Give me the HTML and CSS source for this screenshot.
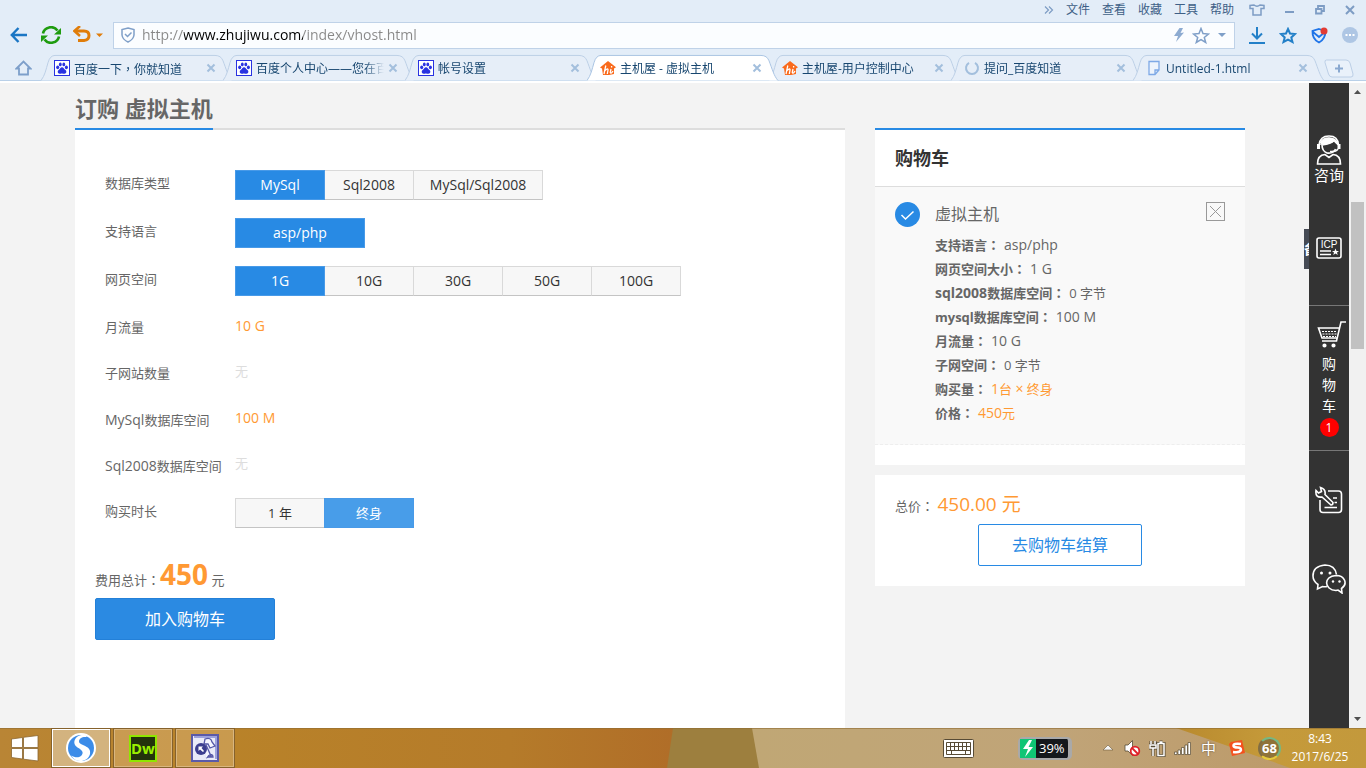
FILE: index.html
```html
<!DOCTYPE html>
<html lang="zh-CN">
<head>
<meta charset="utf-8">
<title>主机屋 - 虚拟主机</title>
<link rel="stylesheet" href="styles.css">
</head>
<body>
<svg class="defs" aria-hidden="true">
  <symbol id="tab-shape" viewBox="0 0 192 28" preserveAspectRatio="none">
    <path d="M0 27.500C4 22 5 16 7 9Q9 1.500 14 1.500H174Q180 1.500 182 7C185 15 187 23 191 27.500"/>
  </symbol>
  <symbol id="paw" viewBox="0 0 16 16">
    <rect x=".5" y=".5" width="15" height="15" fill="#fff" stroke="#2932e1"/>
    <g fill="#2932e1"><ellipse cx="3.700" cy="7.300" rx="1.500" ry="1.900"/><ellipse cx="6.300" cy="4.400" rx="1.400" ry="1.900"/><ellipse cx="9.800" cy="4.400" rx="1.400" ry="1.900"/><ellipse cx="12.400" cy="7.300" rx="1.500" ry="1.900"/><path d="M8 7.200C6.500 7.200 6 9 4.600 10.100C3.200 11.300 3.600 13.800 5.600 13.800C6.700 13.800 7 13.500 8 13.500S9.500 13.800 10.500 13.800C12.600 13.800 12.900 11.300 11.500 10.100C10 9 9.600 7.200 8 7.200z"/></g>
  </symbol>
  <symbol id="house" viewBox="0 0 16 16">
    <path d="M8 1L16 7.200L14 8.500V14L9 15H3L2 8.500L0 7.500z" fill="#f96a1c"/>
    <path d="M5.800 5.500L4 14M4.800 10.800Q8.200 7.500 8 10L7.300 14M11 9L10.300 12.500Q11 14.200 13 11M11.600 6V7.500" fill="none" stroke="#fff" stroke-width="1.300"/>
  </symbol>
  <symbol id="close" viewBox="0 0 10 10"><path d="M1.500 1.500L8.500 8.500M8.500 1.500L1.500 8.500" stroke="#a3bfdd" stroke-width="2"/></symbol>
</svg>

<header class="browser">
  <nav class="menu" aria-label="浏览器菜单">
    <svg width="10" height="8" viewBox="0 0 10 8" fill="none" stroke="#7d9cc4" stroke-width="1.200"><path d="M1 .5L4.500 4L1 7.500M5 .5L8.500 4L5 7.500"/></svg>
    <button>文件</button><button>查看</button><button>收藏</button><button>工具</button><button>帮助</button>
    <div class="window-buttons">
      <button aria-label="皮肤"><svg width="16" height="12" viewBox="0 0 16 12" fill="none" stroke="#7d9cc4" stroke-width="1.500"><path d="M5 1Q8 3.500 11 1L15 1.500V4.500H12V11H4V4.500H1V1.500z"/></svg></button>
      <button aria-label="最小化"><svg width="10" height="10"><path d="M0 7H9" stroke="#7d9cc4" stroke-width="2"/></svg></button>
      <button aria-label="还原"><svg width="10" height="10" viewBox="0 0 10 10" fill="none" stroke="#7d9cc4" stroke-width="1.800"><path d="M3 3V1H9V6H7M1 4H6.500V8.500H1z"/></svg></button>
      <button aria-label="关闭"><svg width="10" height="10"><path d="M1 1L9 9M9 1L1 9" stroke="#7d9cc4" stroke-width="2"/></svg></button>
    </div>
  </nav>

  <div class="toolbar">
    <button aria-label="后退"><svg width="18" height="16" viewBox="0 0 18 16" fill="none" stroke="#1b76c4" stroke-width="2.400"><path d="M17 8H2M8.500 1L1.800 8L8.500 15"/></svg></button>
    <button aria-label="刷新"><svg width="22" height="18" viewBox="0 0 22 18"><path d="M3 7.500A8 7.500 0 0 1 17.500 4.500M19 10.500A8 7.500 0 0 1 4.500 13.500" fill="none" stroke="#1f9c0f" stroke-width="2.600"/><path d="M21 2V8.500H14zM1 16V9.500H8z" fill="#1f9c0f"/></svg></button>
    <button aria-label="恢复" class="undo"><svg width="30" height="18" viewBox="0 0 30 18"><path d="M3 5H11Q16 5 16 9.500T11 14.500H5" fill="none" stroke="#e07d0a" stroke-width="3"/><path d="M7 0L1.500 5L7 10" fill="none" stroke="#e07d0a" stroke-width="2.600"/><path d="M23 7.500H30L26.500 11z" fill="#e07d0a"/></svg></button>
    <div class="address">
      <svg width="14" height="16" viewBox="0 0 14 16" fill="none" stroke="#7f9fc8" stroke-width="1.500"><path d="M7 1L13 2.500V8Q12.500 12.500 7 15Q1.500 12.500 1 8V2.500zM4 7L6.500 9.500L10.500 5.500"/></svg>
      <input class="url" type="text" aria-label="网址" value="http://www.zhujiwu.com/index/vhost.html">
      <button aria-label="极速模式"><svg width="10" height="14" viewBox="0 0 10 14"><path d="M5.500 0H9L6.500 5L10 4.500L2 14L4 8H0z" fill="#8dabd1"/></svg></button>
      <button aria-label="收藏此页"><svg width="18" height="17" viewBox="0 0 18 17"><path d="M9 1.500L11 6.500L16.500 7L12.300 10.400L13.700 15.500L9 12.600L4.300 15.500L5.700 10.400L1.500 7L7 6.500z" fill="none" stroke="#7f9fc8" stroke-width="1.500"/></svg></button>
      <button aria-label="展开"><svg width="8" height="5"><path d="M0 0H8L4 4z" fill="#7f9fc8"/></svg></button>
    </div>
    <div class="extensions">
      <button aria-label="下载"><svg width="16" height="17" viewBox="0 0 16 17" fill="none" stroke="#2380c8" stroke-width="2"><path d="M8 0V11M3 6.500L8 11.500L13 6.500M0 16H16"/></svg></button>
      <button aria-label="收藏夹"><svg width="18" height="17" viewBox="0 0 18 17"><path d="M9 2L11 6.500L16 7L12.300 10.400L13.500 15L9 12.600L4.500 15L5.700 10.400L2 7L7 6.500z" fill="none" stroke="#2380c8" stroke-width="2"/></svg></button>
      <button aria-label="安全"><svg width="17" height="17" viewBox="0 0 17 17"><path d="M8 2L14.500 4Q14.500 12 8 15.500Q1 12 1.500 4zM2 5L8 10L14 5" fill="none" stroke="#1f74e8" stroke-width="1.800"/><circle cx="13" cy="4" r="3.500" fill="#e23b34"/></svg></button>
      <button aria-label="更多"><svg width="16" height="16"><circle cx="8" cy="8" r="8" fill="#aec6e4"/><path d="M3.500 8H5.500M7 8H9M10.500 8H12.500" stroke="#fff" stroke-width="2"/></svg></button>
    </div>
  </div>

  <div class="tabs">
    <button class="home" aria-label="主页"><svg width="17" height="16" viewBox="0 0 17 16" fill="none" stroke="#7d9fca" stroke-width="1.800"><path d="M1.500 8.500L8.500 1.500L15.500 8.500H13V14.500H4V8.500z"/></svg></button>
    <div class="tab"><svg class="shape"><use href="#tab-shape"/></svg><svg class="fav"><use href="#paw"/></svg><a href="#">百度一下<span class="mark" lang="zh-TW">，</span>你就知道</a><button aria-label="关闭标签"><svg width="10" height="10"><use href="#close"/></svg></button></div>
    <div class="tab"><svg class="shape"><use href="#tab-shape"/></svg><svg class="fav"><use href="#paw"/></svg><a href="#">百度个人中心——您在百</a><button aria-label="关闭标签"><svg width="10" height="10"><use href="#close"/></svg></button></div>
    <div class="tab"><svg class="shape"><use href="#tab-shape"/></svg><svg class="fav"><use href="#paw"/></svg><a href="#">帐号设置</a><button aria-label="关闭标签"><svg width="10" height="10"><use href="#close"/></svg></button></div>
    <div class="tab active"><svg class="shape"><use href="#tab-shape"/></svg><svg class="fav"><use href="#house"/></svg><a href="#">主机屋 - 虚拟主机</a><button aria-label="关闭标签"><svg width="10" height="10"><use href="#close"/></svg></button></div>
    <div class="tab"><svg class="shape"><use href="#tab-shape"/></svg><svg class="fav"><use href="#house"/></svg><a href="#">主机屋-用户控制中心</a><button aria-label="关闭标签"><svg width="10" height="10"><use href="#close"/></svg></button></div>
    <div class="tab"><svg class="shape"><use href="#tab-shape"/></svg><svg class="fav" viewBox="0 0 16 16"><path d="M5 2.800A6 6 0 1 0 11 2.800" fill="none" stroke="#a3bfdd" stroke-width="2"/></svg><a href="#">提问_百度知道</a><button aria-label="关闭标签"><svg width="10" height="10"><use href="#close"/></svg></button></div>
    <div class="tab"><svg class="shape"><use href="#tab-shape"/></svg><svg class="fav" viewBox="0 0 16 16"><path d="M3 1.500H13V10L9 14.500H3zM13 10H9V14.500" fill="#eef4fc" stroke="#7ea9e6" stroke-width="1.300"/></svg><a href="#">Untitled-1.html</a><button aria-label="关闭标签"><svg width="10" height="10"><use href="#close"/></svg></button></div>
    <button class="new-tab" aria-label="新建标签"><svg width="30" height="19" viewBox="0 0 30 19"><path d="M2.500 1H22Q25 1 26 4L29 15Q29.500 18 27 18H8Q5.500 18 4.500 15L1 3.500Q.5 1 2.500 1z" fill="#e9f1fa" stroke="#bccfe6"/><path d="M11 9.500H19M15 5.500V13.500" stroke="#8aa9d0" stroke-width="2"/></svg></button>
  </div>
</header>

<div class="viewport">
  <div class="page">
    <main class="order">
      <div class="title-bar"><h1>订购 虚拟主机</h1></div>
      <form class="panel">
        <div class="row"><span class="label">数据库类型</span><div class="group"><button type="button" class="on" aria-pressed="true">MySql</button><button type="button">Sql2008</button><button type="button" class="wide">MySql/Sql2008</button></div></div>
        <div class="row"><span class="label">支持语言</span><div class="group"><button type="button" class="on wide" aria-pressed="true">asp/php</button></div></div>
        <div class="row"><span class="label">网页空间</span><div class="group"><button type="button" class="on" aria-pressed="true">1G</button><button type="button">10G</button><button type="button">30G</button><button type="button">50G</button><button type="button">100G</button></div></div>
        <div class="row text"><span class="label">月流量</span><span class="value">10 G</span></div>
        <div class="row text"><span class="label">子网站数量</span><span class="value none">无</span></div>
        <div class="row text"><span class="label"><span class="latin">MySql</span>数据库空间</span><span class="value">100 M</span></div>
        <div class="row text"><span class="label"><span class="latin">Sql2008</span>数据库空间</span><span class="value none">无</span></div>
        <div class="row"><span class="label">购买时长</span><div class="group cn"><button type="button">1 年</button><button type="button" class="on soft" aria-pressed="true">终身</button></div></div>
        <div class="total">
          <p>费用总计<span class="mark" lang="zh-TW">：</span><strong>450</strong> 元</p>
          <button type="button" class="add">加入购物车</button>
        </div>
      </form>
    </main>

    <aside class="cart">
      <section class="cart-list">
        <h2>购物车</h2>
        <article class="item">
          <label class="check"><input type="checkbox" checked aria-label="选择虚拟主机"><svg width="25" height="25" viewBox="0 0 25 25"><path d="M6.500 13L10.500 17L18.500 9.500" fill="none" stroke="#fff" stroke-width="1.500"/></svg></label>
          <div class="details">
            <h3>虚拟主机</h3>
            <dl>
              <div><dt>支持语言<span class="mark" lang="zh-TW">：</span></dt><dd class="latin">asp/php</dd></div>
              <div><dt>网页空间大小<span class="mark" lang="zh-TW">：</span></dt><dd class="latin">1 G</dd></div>
              <div><dt><span class="latin">sql2008</span>数据库空间<span class="mark" lang="zh-TW">：</span></dt><dd>0 字节</dd></div>
              <div><dt>mysql数据库空间<span class="mark" lang="zh-TW">：</span></dt><dd class="latin">100 M</dd></div>
              <div><dt>月流量<span class="mark" lang="zh-TW">：</span></dt><dd class="latin">10 G</dd></div>
              <div><dt>子网空间<span class="mark" lang="zh-TW">：</span></dt><dd>0 字节</dd></div>
              <div><dt>购买量<span class="mark" lang="zh-TW">：</span></dt><dd class="price"><span class="latin">1</span>台 <span class="latin">×</span> 终身</dd></div>
              <div><dt>价格<span class="mark" lang="zh-TW">：</span></dt><dd class="price"><span class="latin">450</span>元</dd></div>
            </dl>
          </div>
          <button class="remove" aria-label="删除"><svg width="19" height="19" viewBox="0 0 19 19" fill="none" stroke="#999"><rect x=".5" y=".5" width="18" height="18"/><path d="M4 4L15 15M15 4L4 15"/></svg></button>
        </article>
      </section>
      <section class="checkout">
        <p>总价<span class="mark" lang="zh-TW">：</span> <strong>450.00 元</strong></p>
        <button>去购物车结算</button>
      </section>
    </aside>
  </div>

  <nav class="side" aria-label="快捷工具">
    <span class="flyout">备</span>
    <a class="service" href="#">
      <svg width="26" height="30" viewBox="0 0 26 30" fill="none" stroke="#fff" stroke-width="1.600"><path d="M3 10Q4 1 13 1T22.500 10"/><path d="M4.500 8Q6 3 13 3T21.500 9Q20 8 18 5.500Q15 9 6 10Q6 16 11 18Q17 19 19.500 14"/><path d="M5 9Q7 4 13 3.500Q17 3.500 18 5.500Q13 9 5 9z" fill="#fff"/><path d="M2.500 9V14M23 9V14" stroke-width="3"/><path d="M22 14Q20 17 14 16.500"/><path d="M1.500 29Q1.500 20 9 19.500L13 22.500L17 19.500Q24.500 20 24.500 29z"/></svg>
      <span>咨询</span>
    </a>
    <a class="icp" href="#">
      <svg width="26" height="22" viewBox="0 0 26 22"><rect x="1" y="1" width="24" height="20" rx="2" fill="none" stroke="#fff" stroke-width="1.600"/><text x="13" y="11" class="icp-text">ICP</text><path d="M4 14H15M4 17.500H15" stroke="#fff" stroke-width="1.300"/><path d="M19.500 11.500L20.500 14H23L21 15.500L21.700 18L19.500 16.500L17.300 18L18 15.500L16 14H18.500z" fill="#fff"/></svg>
    </a>
    <a class="basket" href="#">
      <svg width="30" height="28" viewBox="0 0 30 28" fill="none" stroke="#fff" stroke-width="1.600"><path d="M29 2H24L19.500 21H5M22.500 8H1.500L5 18H20"/><path d="M5 11.500H20M5.500 14H19.500M6 16.500H19" stroke-width="1" stroke-dasharray="2 1"/><circle cx="7.500" cy="25.500" r="1.300" fill="#fff"/><circle cx="16.500" cy="25.500" r="1.300" fill="#fff"/></svg>
      <span class="vertical">购物车</span>
      <span class="badge">1</span>
    </a>
    <a class="tools" href="#">
      <svg width="28" height="28" viewBox="0 0 28 28" fill="none" stroke="#fff" stroke-width="1.600"><path d="M13 5H23.500Q26.500 5 26.500 8V23.500Q26.500 26.500 23.500 26.500H8Q5 26.500 5 23.500V14M18 12H22M19.500 16.500H22M9.500 21.500H22"/><path d="M5.500 1.500L6.500 5.500L3.500 7L1 4.500Q0 12 7 11L16 19Q18 19 18 16.500L10 8.500Q11 3 5.500 1.500z"/></svg>
    </a>
    <a class="wechat" href="#">
      <svg width="34" height="30" viewBox="0 0 34 30" fill="none" stroke="#fff" stroke-width="1.600"><path d="M24.500 10.500Q23 1 13 1Q1 2 1 12Q1 17 6 20.500L5.500 25L10.500 22.500Q13 23 15 22.500"/><path d="M24 11.500C11 12 12 26 24 26.500L26 26L30 29L29.500 24.500C36 20 33 11.500 24 11.500z"/><g fill="#fff" stroke="none"><circle cx="9.500" cy="9" r="1.500"/><circle cx="18" cy="9" r="1.500"/><circle cx="21" cy="17.500" r="1.200"/><circle cx="27.500" cy="17.500" r="1.200"/></g></svg>
    </a>
  </nav>

  <div class="scrollbar" aria-hidden="true">
    <svg width="17" height="17"><path d="M5 11L8.500 7L12 11z" fill="#505050"/></svg>
    <span class="before"></span><span class="thumb"></span><span class="after"></span>
    <svg width="17" height="17"><path d="M5 6L8.500 10L12 6z" fill="#505050"/></svg>
  </div>
</div>

<footer class="taskbar">
  <svg class="wallpaper" viewBox="0 0 1366 40" preserveAspectRatio="none" aria-hidden="true">
    <defs>
      <linearGradient id="wood"><stop offset="0" stop-color="#b98535"/><stop offset=".3" stop-color="#b98329"/><stop offset=".75" stop-color="#b57b2a"/><stop offset="1" stop-color="#b06d28"/></linearGradient>
      <linearGradient id="sand"><stop offset="0" stop-color="#c0a775"/><stop offset=".5" stop-color="#c0a478"/><stop offset="1" stop-color="#bb9765"/></linearGradient>
      <linearGradient id="gold"><stop offset="0" stop-color="#b98a2e"/><stop offset=".5" stop-color="#c59a3a"/><stop offset="1" stop-color="#c3993c"/></linearGradient>
    </defs>
    <path d="M0 0H680V40H0z" fill="url(#wood)"/>
    <path d="M673 0H755L762 40H667z" fill="#9d7f3e"/>
    <path d="M752 0H1366V40H759z" fill="url(#sand)"/>
    <path d="M1176 0H1366V40H1290Q1240 22 1176 0z" fill="url(#gold)"/>
    <path d="M0 .5H1366" stroke="#8f6c34" stroke-opacity=".6"/>
  </svg>
  <button class="start" aria-label="开始"><svg width="28" height="27" viewBox="0 0 28 27" fill="#fff" stroke="#8a6630" stroke-width=".8"><path d="M.5 4L11.500 2.500V12.500H.5zM12.500 2.300L27 .5V12.500H12.500zM.5 13.500H11.500V24L.5 22.500zM12.500 13.500H27V26L12.500 24.200z"/></svg></button>
  <button class="app current" aria-label="搜狗浏览器"><svg width="32" height="32" viewBox="0 0 32 32"><circle cx="16" cy="16" r="15" fill="#fff"/><circle cx="16" cy="16" r="13" fill="#3c8ce8"/><path d="M21.500 3.500C11 1 5.500 11 12.500 15.500C18 18.500 19 21 16 24C13 26.500 9 25 6 23.500C11 32 23 30 25 22C27 13 14 14 14 9.500C14 6.500 17 4.500 21.500 5z" fill="#fff"/></svg></button>
  <button class="app" aria-label="Dreamweaver"><span class="dw">Dw</span></button>
  <button class="app" aria-label="资源工具"><svg width="28" height="28" viewBox="0 0 28 28"><rect x="1" y="1" width="26" height="26" fill="#e9eaf8" stroke="#5a5aa8" stroke-width="2"/><path d="M3 3H25V25" fill="none" stroke="#9da2dc" stroke-width="2"/><path d="M14 5Q20 3 21 8L24 12L19 14L17 10H13zM15 11L20 22L15 24M17 22Q22 19 22 23H16" fill="#f6f6ff" stroke="#5558a8" stroke-width="1.300"/><circle cx="10" cy="15" r="6" fill="#3c3e8f"/><path d="M7.500 12.500H12L10.500 14L13 17L12 18L9 15.500L7.500 17z" fill="#fff"/></svg></button>

  <div class="tray">
    <button class="keyboard" aria-label="触摸键盘"><svg width="31" height="19" viewBox="0 0 31 19"><rect x=".5" y=".5" width="30" height="18" rx="1" fill="#fff" stroke="#574b35"/><path d="M3.500 3.500H27.500V15.500H3.500zM3.500 7.500H27.500M3.500 11.500H27.500M7.500 3.500V11.500M11.500 3.500V11.500M15.500 3.500V11.500M19.500 3.500V11.500M23.500 3.500V11.500M8.500 11.500V15.500M22.500 11.500V15.500" fill="none" stroke="#574b35"/></svg></button>
    <div class="battery"><svg width="16" height="19" viewBox="0 0 16 19"><path d="M0 0H16V19H0z" fill="#0fc575"/><path d="M9 1L3 10H8L5 18L13 8H8.500L12 1z" fill="#fff"/></svg><span>39%</span></div>
    <div class="status">
      <svg class="more" width="10" height="6"><path d="M5 0L10 5H0z" fill="#f4f4f4" stroke="#6c5a3b" stroke-width=".6"/></svg>
      <svg width="17" height="16" viewBox="0 0 17 16"><path d="M1 5H4L8.500 .5V15.500L4 11H1z" fill="#fff" stroke="#574b35" stroke-width=".8"/><circle cx="11" cy="11" r="4.300" fill="#fff" stroke="#df2027" stroke-width="1.800"/><path d="M8 8L14 14" stroke="#df2027" stroke-width="1.800"/></svg>
      <svg width="17" height="17" viewBox="0 0 17 17" fill="none"><path d="M2 1V4M6 1V4M1 5H7V8H1zM4 8V16M9 3.500H15V15.500H9zM10.500 2H13.500" stroke="#574b35" stroke-width="3"/><path d="M2 1V4M6 1V4M1 5H7V8H1zM4 8V16M9 3.500H15V15.500H9zM10.500 2H13.500" stroke="#fff" stroke-width="1.500"/></svg>
      <svg width="17" height="13" viewBox="0 0 17 13"><path d="M.5 10H3V12.500H.5zM4 8H6.500V12.500H4zM7.500 5.500H10V12.500H7.500zM11 3H13.500V12.500H11zM14 .5H16.500V12.500H14z" fill="#fff" stroke="#574b35" stroke-width=".7"/></svg>
      <span class="ime">中</span>
      <svg width="16" height="16" viewBox="0 0 16 16"><path d="M2 2L13 0L16 13L3 16L0 4z" fill="#f4511e"/><path d="M12 4Q4 3 4.500 6Q5 7.500 8.500 7.500T12 10Q11 13 4 12" fill="none" stroke="#fff" stroke-width="2.400"/></svg>
      <div class="score">68</div>
    </div>
    <time class="clock"><span>8:43</span><span>2017/6/25</span></time>
  </div>
</footer>
</body>
</html>
```
FILE: styles.css
```css
* { box-sizing: border-box; }
body {
  margin: 0;
  height: 100vh;
  display: flex;
  flex-direction: column;
  overflow: hidden;
  font: 13px/20px "Open Sans", "Noto Sans CJK SC", sans-serif;
  color: #666;
  background: #f3f3f3;
}
h1, h2, h3, p, dl, dd { margin: 0; }
button { font: inherit; color: inherit; border: 0; padding: 0; background: none; }
svg { display: block; flex: none; }
a { color: inherit; text-decoration: none; }
.defs { position: absolute; width: 0; height: 0; }
.latin { font-size: 14px; }
/* centred full-width punctuation */
.mark { font-family: "Noto Sans CJK TC", sans-serif; }

/* browser chrome */
.browser { background: #e3edf8; border-bottom: 2px solid #fff; flex: none; }
.menu {
  display: flex;
  justify-content: flex-end;
  align-items: center;
  gap: 12px;
  height: 20px;
  padding-right: 11px;
  font-size: 12px;
  color: #3e5f86;
}
.window-buttons { display: flex; align-items: center; gap: 20px; padding-left: 3px; }
.toolbar { display: flex; align-items: center; height: 30px; padding: 0 8px 0 10px; gap: 12px; }
.undo { margin-left: -1px; }
.address {
  flex: 1;
  display: flex;
  align-items: center;
  gap: 8px;
  height: 27px;
  margin-left: -2px;
  padding: 0 8px 0 7px;
  background: #fbfdff;
  border: 1px solid #bfd2e8;
}
.url {
  flex: 1;
  min-width: 0;
  height: 24px;
  margin-left: -1px;
  padding: 0;
  border: 0;
  outline: 0;
  font: 14px/24px "Open Sans", "Noto Sans CJK SC", sans-serif;
  color: transparent;
  background: linear-gradient(90deg, #888 42px, #000 42px, #000 161px, #888 161px);
  -webkit-background-clip: text;
  background-clip: text;
}
.extensions { display: flex; align-items: center; gap: 14px; padding-left: 2px; }

.tabs { display: flex; align-items: flex-end; height: 31px; border-bottom: 1px solid #b9d0e8; }
.home { width: 41px; padding: 0 0 4px 15px; }
.tab {
  position: relative;
  flex: 0 1 192px;
  min-width: 0;
  display: flex;
  align-items: center;
  height: 26px;
  margin-right: -10px;
  padding: 2px 17px 0 13px;
  font-size: 12px;
  color: #17466f;
}
.tab .shape { position: absolute; left: 0; top: 0; width: 100%; height: 27px; fill: #e6eef8; stroke: #bccfe6; }
.tab.active { z-index: 1; }
.tab.active .shape { fill: #fff; stroke: #a9c4e2; }
.fav { position: relative; width: 16px; height: 16px; margin-right: 4px; }
.tab a {
  position: relative;
  flex: 1;
  overflow: hidden;
  white-space: nowrap;
  margin-right: 4px;
  padding-top: 2px;
  mask-image: linear-gradient(90deg, #000 85%, transparent);
}
.tab button { position: relative; }
.new-tab { margin: 0 0 2px 9px; }

/* page */
.viewport { flex: 1; display: flex; min-height: 0; overflow: hidden; }
.page { flex: 1; display: flex; gap: 30px; min-width: 0; padding: 0 64px 0 75px; }
.order { flex: 1; display: flex; flex-direction: column; min-width: 0; }
.title-bar { display: flex; height: 47px; }
.title-bar::after { content: ""; flex: 1; border-bottom: 2px solid #ddd; }
h1 { font-size: 22px; line-height: 50px; border-bottom: 2px solid #288ae4; }
.panel { flex: 1; display: flex; flex-direction: column; gap: 18px; padding: 40px 20px 0; background: #fff; }
.row { display: flex; flex: none; height: 30px; padding-left: 10px; }
.row.text { height: 28px; }
.label { width: 130px; line-height: 27px; white-space: nowrap; }
.value { font-size: 14px; line-height: 24px; color: #ff9933; }
.value.none { font-size: 13px; line-height: 22px; color: #ddd; }
.group { display: flex; font-size: 14px; }
.group.cn { font-size: 13px; }
.group button {
  min-width: 90px;
  margin-right: -1px;
  color: #333;
  background: #f7f7f7;
  border: 1px solid #d9d9d9;
  border-bottom-color: #c4c4c4;
}
.group .wide { min-width: 130px; }
.group .on { position: relative; color: #fff; background: #288ae4; border-color: #489ae8; }
.group .soft { background: #489de9; }
.total { display: flex; flex-direction: column; align-items: flex-start; padding-top: 11px; }
.total p { line-height: 34px; height: 41px; }
.total strong { font-size: 28px; color: #ff9933; }
.add {
  width: 180px;
  height: 42px;
  font-size: 16px;
  color: #fff;
  background: #2b8ae2;
  border: 1px solid #2380d8;
  border-radius: 2px;
}

/* cart */
.cart { flex: 0 0 370px; padding-top: 45px; }
.cart-list { background: #fff; border-top: 2px solid #288ae4; padding-bottom: 20px; }
h2 { height: 57px; padding-left: 20px; font-size: 18px; line-height: 56px; color: #333; border-bottom: 1px solid #ddd; }
.item {
  display: flex;
  align-items: flex-start;
  gap: 15px;
  padding: 15px 20px 19px;
  background: #f9f9f9;
  border-bottom: 1px dashed #eee;
}
.check { display: grid; }
.check > * { grid-area: 1 / 1; }
.check input { appearance: none; width: 25px; height: 25px; margin: 0; border-radius: 50%; background: #288ae4; }
.check svg { z-index: 1; }
.details { flex: 1; }
h3 { font-size: 16px; font-weight: 400; line-height: 25px; padding-bottom: 6px; }
dl > div { display: flex; align-items: baseline; gap: 4px; height: 24px; line-height: 24px; }
dt { font-weight: 700; }
.price { color: #ff9933; }
.checkout { margin-top: 10px; padding: 13px 20px 20px; background: #fff; }
.checkout p { height: 36px; line-height: 32px; }
.checkout strong { font-size: 19px; font-weight: 400; color: #ff9933; }
.checkout button {
  display: block;
  width: 164px;
  height: 42px;
  margin: 0 auto;
  font-size: 16px;
  color: #288ae4;
  background: #fff;
  border: 1px solid #288ae4;
  border-radius: 2px;
}

/* right rail */
.side { position: relative; flex: 0 0 40px; background: #333; color: #fff; }
.side a { display: flex; flex-direction: column; align-items: center; }
.flyout {
  position: absolute;
  right: 100%;
  top: 146px;
  width: 5px;
  height: 40px;
  overflow: hidden;
  line-height: 40px;
  font-weight: 700;
  background: #454a54;
}
.service { padding-top: 52px; font-size: 15px; }
.icp { padding: 52px 0 46px; border-bottom: 1px solid #777; }
.icp-text { font: 10px "Liberation Sans", Arial, sans-serif; fill: #fff; text-anchor: middle; }
.basket { padding: 14px 0 13px; border-bottom: 1px solid #777; }
.basket svg { margin-left: 6px; }
.vertical { width: 14px; padding: 5px 0 2px; font-size: 14px; line-height: 21px; }
.badge { width: 19px; height: 19px; border-radius: 50%; background: #f00; font-size: 12px; line-height: 19px; text-align: center; }
.tools { padding-top: 35px; }
.wechat { padding-top: 50px; }
.scrollbar { flex: 0 0 17px; display: flex; flex-direction: column; align-items: center; background: #f1f1f1; }
.before { flex: 102; }
.thumb { flex: 147; width: 13px; background: #c1c1c1; }
.after { flex: 362; }

/* taskbar */
.taskbar { position: relative; flex: none; display: flex; height: 40px; gap: 2px; }
.wallpaper { position: absolute; inset: 0; width: 100%; height: 100%; }
.start, .app, .tray { position: relative; display: flex; align-items: center; justify-content: center; }
.start { width: 49px; }
.app { width: 60px; background: rgba(225, 190, 135, .4); border: 1px solid #86622c; box-shadow: inset 0 0 0 1px #d9b67f; }
.app.current { background: rgba(228, 210, 180, .6); box-shadow: inset 0 0 0 1px #fff; }
.dw {
  width: 28px;
  height: 27px;
  border: 2px solid #8fe600;
  background: #23330c;
  color: #9bf000;
  font: 700 15px/22px "Noto Sans", sans-serif;
}
.tray { margin-left: auto; padding-right: 16px; color: #fff; }
.battery {
  display: flex;
  align-items: center;
  width: 54px;
  height: 23px;
  margin: 0 31px 0 44px;
  border: 2px solid #a9a9a9;
  border-right-width: 4px;
  border-radius: 5px;
  background: #14181c;
  font-size: 13px;
}
.battery span { padding-left: 3px; }
.status { display: flex; align-items: center; gap: 8px; }
.more { margin-right: 3px; }
.ime { padding: 0 5px 0 2px; font-size: 15px; text-shadow: 0 0 2px #574b35; }
.score {
  width: 23px;
  height: 23px;
  margin-left: 5px;
  border: 2px solid #75b884;
  border-left-color: #816d43;
  border-bottom-color: #e5c93c;
  border-radius: 50%;
  background: #8f7339;
  font-size: 13px;
  font-weight: 700;
  line-height: 19px;
  text-align: center;
}
.clock { display: flex; flex-direction: column; width: 60px; margin-left: 9px; font-size: 12px; line-height: 18px; text-align: center; }
```
